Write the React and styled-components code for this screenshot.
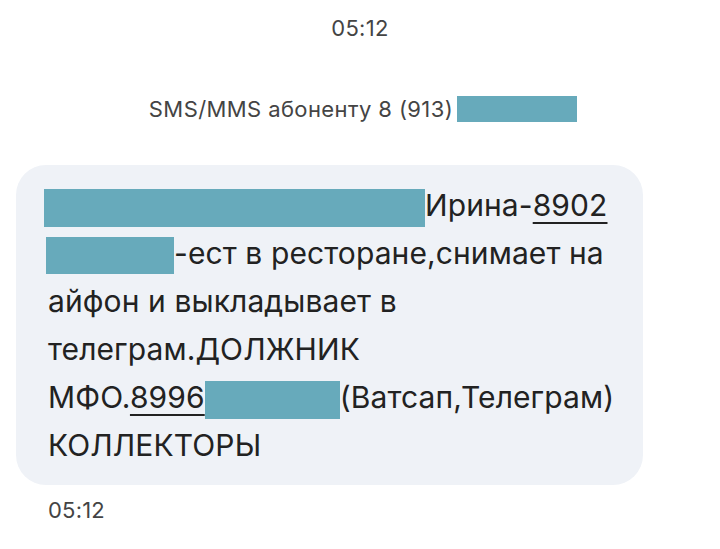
import React from "react";
import styled, { createGlobalStyle } from "styled-components";

const GlobalStyle = createGlobalStyle`
  html, body {
    margin: 0;
    padding: 0;
    background: #ffffff;
  }
  body {
    font-family: Inter, Roboto, "Noto Sans", sans-serif;
    color: #222222;
  }
`;

const Screen = styled.div`
  width: 720px;
  height: 549px;
  display: flex;
  flex-direction: column;
  overflow: hidden;
`;

const DateStamp = styled.div`
  text-align: center;
  font-size: 22px;
  line-height: 24px;
  letter-spacing: 0.3px;
  color: #444444;
  padding-top: 16px;
`;

const Recipient = styled.div`
  display: flex;
  justify-content: center;
  align-items: center;
  gap: 4px;
  margin-top: 56px;
  padding-left: 6px;
  font-size: 22px;
  line-height: 26px;
  letter-spacing: 0.4px;
  color: #444444;
`;

// the hidden bits of the number/name, painted over like in the original
const Redact = styled.span`
  display: inline-block;
  vertical-align: middle;
  width: ${(p) => p.$w}px;
  height: ${(p) => p.$h}px;
  margin-left: ${(p) => p.$ml || 0}px;
  background: #67aabb;
`;

const Bubble = styled.div`
  margin: 43px 0 0 16px;
  width: 627px;
  box-sizing: border-box;
  padding: 16px 20px 16px 32px;
  background: #eff2f7;
  border-radius: 30px;
  font-size: 30px;
  line-height: 48px;
  letter-spacing: 0.1px;
  color: #222222;
`;

const Line = styled.div`
  white-space: nowrap;
`;

const Phone = styled.span`
  text-decoration: underline;
  text-decoration-thickness: 2px;
  text-underline-offset: 6px;
`;

const Time = styled.div`
  margin: 13px 0 0 48px;
  font-size: 22px;
  line-height: 24px;
  letter-spacing: 0.2px;
  color: #444444;
`;

export default function App() {
  return (
    <Screen>
      <GlobalStyle />
      <DateStamp>05:12</DateStamp>
      <Recipient>
        SMS/MMS абоненту 8 (913)
        <Redact $w={120} $h={26} />
      </Recipient>
      <Bubble>
        <Line>
          <Redact $w={381} $h={38} $ml={-4} />
          Ирина-<Phone>8902</Phone>
        </Line>
        <Line>
          <Redact $w={128} $h={37} $ml={-2} />
          -ест в ресторане,снимает на
        </Line>
        <Line>айфон и выкладывает в</Line>
        <Line>телеграм.ДОЛЖНИК</Line>
        <Line>
          МФО.<Phone>8996</Phone>
          <Redact $w={135} $h={38} />
          (Ватсап,Телеграм)
        </Line>
        <Line>КОЛЛЕКТОРЫ</Line>
      </Bubble>
      <Time>05:12</Time>
    </Screen>
  );
}
